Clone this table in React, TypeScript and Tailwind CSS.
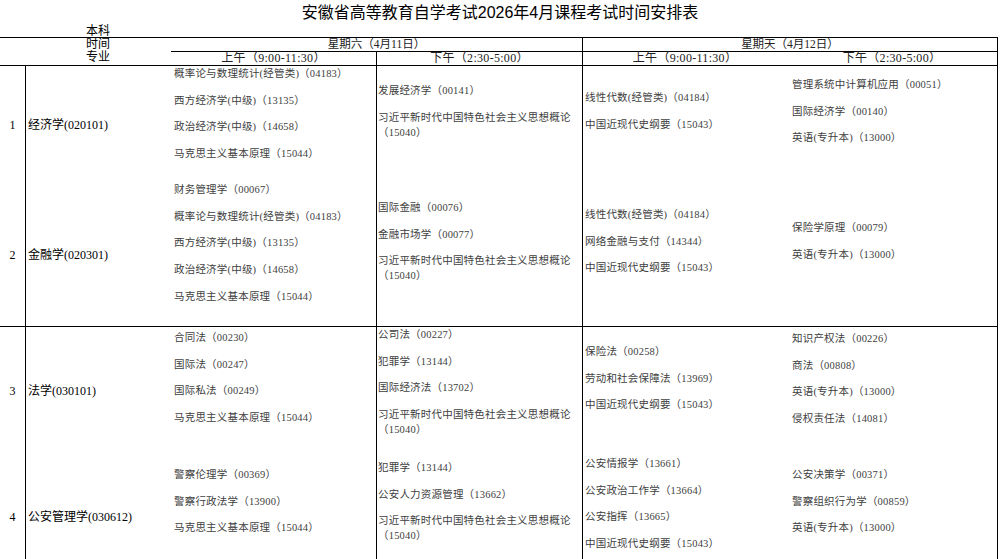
import React from "react";

type Item = string | [string, string];

const serif = { fontFamily: '"Liberation Serif", "Noto Sans CJK SC", serif' };

const XI: Item = ["习近平新时代中国特色社会主义思想概论", "（15040）"];

function Courses({ items, pt, className = "" }: { items: Item[]; pt: string; className?: string }) {
  return (
    <div className={`flex flex-col gap-[11.7px] text-[10.5px] leading-[15px] tracking-[0.2px] text-[#404040] whitespace-nowrap ${pt} ${className}`}>
      {items.map((it, i) =>
        typeof it === "string" ? (
          <div key={i}>{it}</div>
        ) : (
          <div key={i}>
            <div>{it[0]}</div>
            <div>{it[1]}</div>
          </div>
        )
      )}
    </div>
  );
}

type Row = {
  no: string;
  major: string;
  border?: boolean;
  c3: Item[]; p3: string;
  c4: Item[]; p4: string;
  c5: Item[]; p5: string;
  c6: Item[]; p6: string;
};

const rows: Row[] = [
  {
    no: "1",
    major: "经济学(020101)",
    c3: ["概率论与数理统计(经管类)（04183）", "西方经济学(中级)（13135）", "政治经济学(中级)（14658）", "马克思主义基本原理（15044）"],
    p3: "pt-0",
    c4: ["发展经济学（00141）", XI],
    p4: "pt-[17px]",
    c5: ["线性代数(经管类)（04184）", "中国近现代史纲要（15043）"],
    p5: "pt-[24px]",
    c6: ["管理系统中计算机应用（00051）", "国际经济学（00140）", "英语(专升本)（13000）"],
    p6: "pt-[11px]",
  },
  {
    no: "2",
    major: "金融学(020301)",
    border: true,
    c3: ["财务管理学（00067）", "概率论与数理统计(经管类)（04183）", "西方经济学(中级)（13135）", "政治经济学(中级)（14658）", "马克思主义基本原理（15044）"],
    p3: "-mt-[2px]",
    c4: ["国际金融（00076）", "金融市场学（00077）", XI],
    p4: "pt-[16px]",
    c5: ["线性代数(经管类)（04184）", "网络金融与支付（14344）", "中国近现代史纲要（15043）"],
    p5: "pt-[23px]",
    c6: ["保险学原理（00079）", "英语(专升本)（13000）"],
    p6: "pt-[36px]",
  },
  {
    no: "3",
    major: "法学(030101)",
    c3: ["合同法（00230）", "国际法（00247）", "国际私法（00249）", "马克思主义基本原理（15044）"],
    p3: "pt-[3px]",
    c4: ["公司法（00227）", "犯罪学（13144）", "国际经济法（13702）", XI],
    p4: "pt-0",
    c5: ["保险法（00258）", "劳动和社会保障法（13969）", "中国近现代史纲要（15043）"],
    p5: "pt-[17px]",
    c6: ["知识产权法（00226）", "商法（00808）", "英语(专升本)（13000）", "侵权责任法（14081）"],
    p6: "pt-[4px]",
  },
  {
    no: "4",
    major: "公安管理学(030612)",
    c3: ["警察伦理学（00369）", "警察行政法学（13900）", "马克思主义基本原理（15044）"],
    p3: "pt-[12px]",
    c4: ["犯罪学（13144）", "公安人力资源管理（13662）", XI],
    p4: "pt-[5px]",
    c5: ["公安情报学（13661）", "公安政治工作学（13664）", "公安指挥（13665）", "中国近现代史纲要（15043）"],
    p5: "pt-[1px]",
    c6: ["公安决策学（00371）", "警察组织行为学（00859）", "英语(专升本)（13000）"],
    p6: "pt-[12px]",
  },
];

export default function App() {
  return (
    <div className="w-[1000px] h-[559px] overflow-hidden bg-white text-black" style={serif}>
      <div
        className="h-[23px] flex items-center justify-center pt-[3px] text-[16px] leading-[20px] text-black"
        style={{ fontFamily: '"Liberation Sans", "Noto Sans CJK SC", sans-serif' }}
      >
        安徽省高等教育自学考试2026年4月课程考试时间安排表
      </div>
      <div className="h-[14px] w-[171px] pl-[25px] flex items-center justify-center text-[12px] leading-[14px] pt-[1px]">
        本科
      </div>
      <div className="w-[998px] grid grid-cols-[26px_145px_205px_206px_205px_210px] grid-rows-[14px_14px_118px_143px_128px_124px] border-t border-r border-black">
        {/* header */}
        <div className="col-span-2 row-span-2 border-b border-black pl-[25px] flex flex-col items-center text-[12px] leading-[13px]">
          <div>时间</div>
          <div>专业</div>
        </div>
        <div className="col-span-2 border-b border-black flex items-center justify-center text-[11.5px] leading-[13px] text-[#222]">
          星期六（4月11日）
        </div>
        <div className="col-span-2 border-b border-l border-black flex items-center justify-center text-[11.5px] leading-[13px] text-[#222]">
          星期天（4月12日）
        </div>
        <div className="border-b border-black flex items-center justify-center text-[12px] leading-[13px] tracking-[0.3px] text-[#222]">
          上午（9:00-11:30）
        </div>
        <div className="border-b border-l border-black flex items-center justify-center text-[12px] leading-[13px] tracking-[0.3px] text-[#222]">
          下午（2:30-5:00）
        </div>
        <div className="border-b border-l border-black flex items-center justify-center text-[12px] leading-[13px] tracking-[0.3px] text-[#222]">
          上午（9:00-11:30）
        </div>
        <div className="border-b border-black flex items-center justify-center text-[12px] leading-[13px] tracking-[0.3px] text-[#222]">
          下午（2:30-5:00）
        </div>

        {rows.map((r) => {
          const b = r.border ? "border-b border-black" : "";
          return (
            <React.Fragment key={r.no}>
              <div className={`border-r border-black flex items-center justify-center text-[12px] ${b}`}>{r.no}</div>
              <div className={`flex items-center pl-[2px] text-[12px] text-black whitespace-nowrap ${b}`}>{r.major}</div>
              <div className={`pl-[3px] ${b}`}>
                <Courses items={r.c3} pt={r.p3} />
              </div>
              <div className={`border-l border-black pl-[1px] ${b}`}>
                <Courses items={r.c4} pt={r.p4} />
              </div>
              <div className={`border-l border-black pl-[2px] ${b}`}>
                <Courses items={r.c5} pt={r.p5} />
              </div>
              <div className={`pl-[5px] ${b}`}>
                <Courses items={r.c6} pt={r.p6} />
              </div>
            </React.Fragment>
          );
        })}
      </div>
    </div>
  );
}
